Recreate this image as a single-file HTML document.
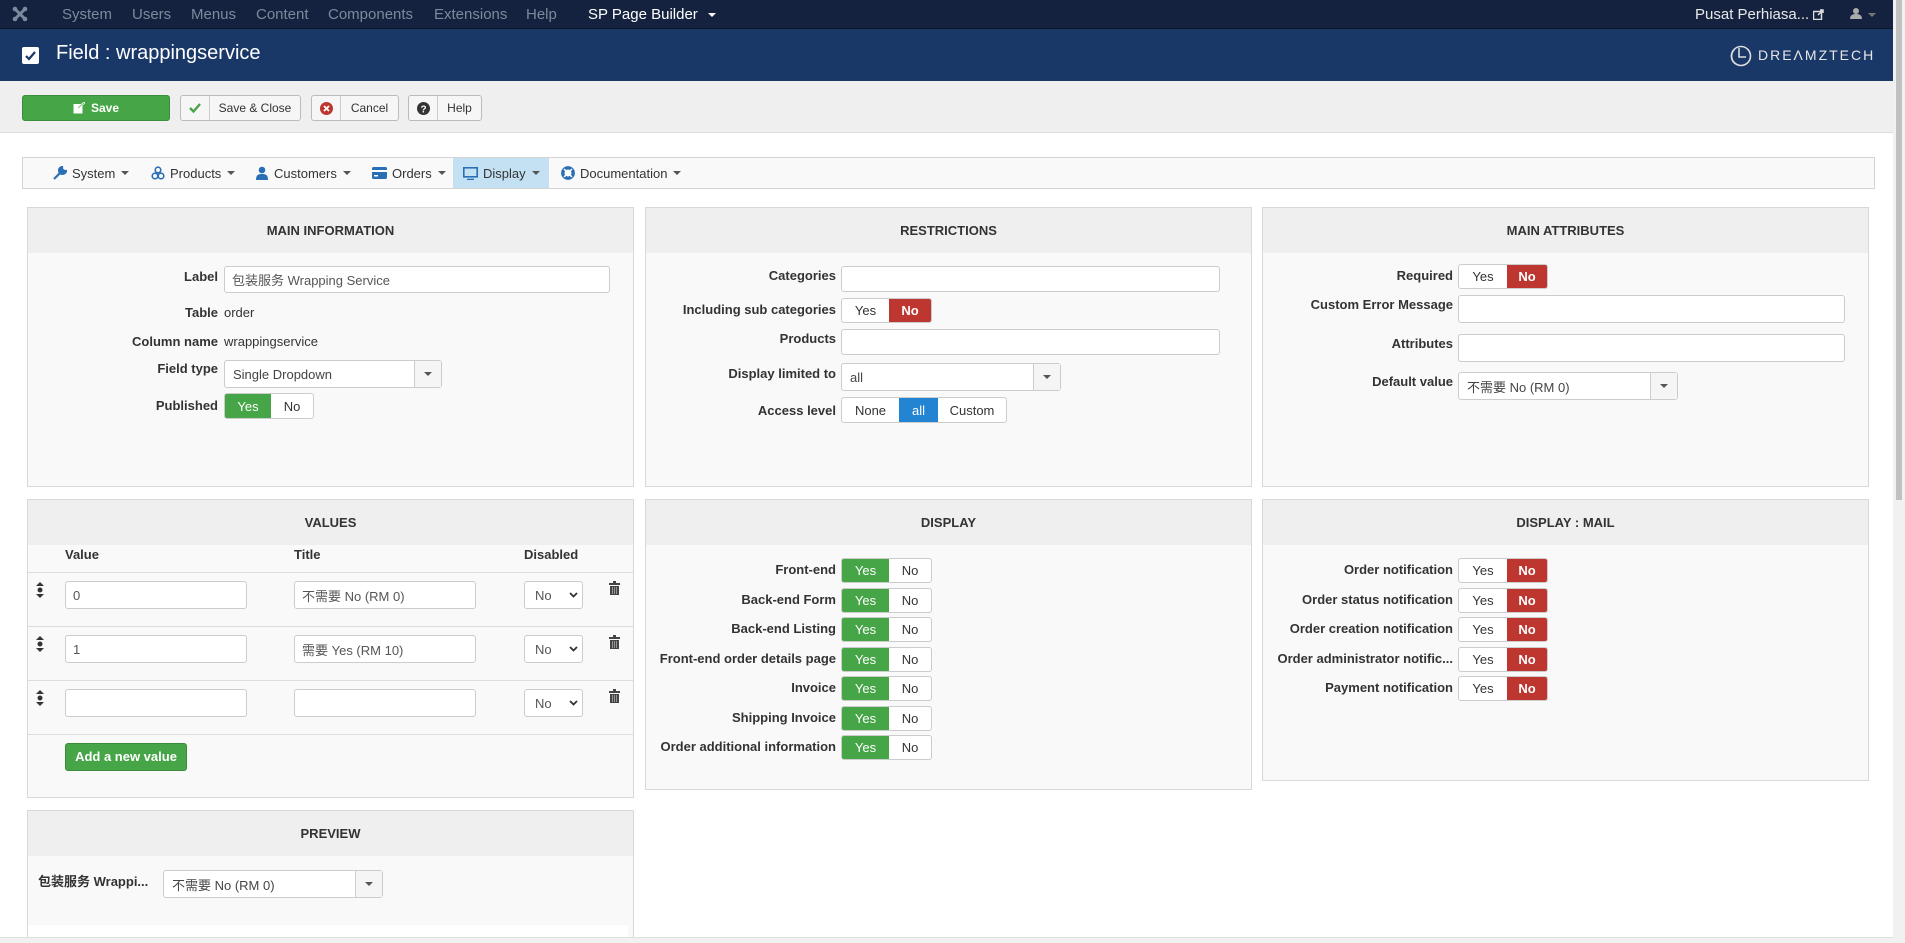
<!DOCTYPE html>
<html style="width:1905px;height:943px;overflow:hidden"><head><meta charset="utf-8"><style>
*{box-sizing:border-box;margin:0;padding:0}
body{width:1905px;height:943px;overflow:hidden;background:#fff;font-family:"Liberation Sans","Noto Sans CJK SC",sans-serif;font-size:13px;color:#333;position:relative}
.a{position:absolute}
.nav{left:0;top:0;width:1893px;height:29px;background:#14223f;border-bottom:1px solid #0c1628}
.nav span{position:absolute;top:6px;font-size:15px;color:#7d899c}
.hdr{left:0;top:29px;width:1893px;height:52px;background:#1a3867}
.tb{left:0;top:81px;width:1893px;height:52px;background:#efefef;border-bottom:1px solid #ddd}
.btn{position:absolute;top:95px;height:26px;border:1px solid #bbb;border-radius:3px;background:#f6f6f6;font-size:12px;color:#333;display:flex;align-items:center}
.btn .ic{width:29px;height:100%;border-right:1px solid #ccc;display:flex;align-items:center;justify-content:center}
.btn .tx{flex:1;text-align:center}
.tabs{left:22px;top:157px;width:1853px;height:32px;background:#f9f9f9;border:1px solid #d4d4d4}
.tab{position:absolute;top:0;height:30px;display:flex;align-items:center;font-size:13px;color:#333}
.car{display:inline-block;width:0;height:0;border-left:4px solid transparent;border-right:4px solid transparent;border-top:4px solid #555;margin-left:6px;vertical-align:middle}
.pn{position:absolute;background:#f9f9f9;border:1px solid #d8d8d8}
.ph{height:45px;background:#efefef;text-align:center;line-height:45px;font-weight:bold;font-size:13px;color:#333}
.l{position:absolute;text-align:right;font-weight:bold;font-size:13px;color:#333;white-space:nowrap}
.v{position:absolute;font-size:13px;color:#333}
.in{position:absolute;background:#fff;border:1px solid #ccc;border-radius:3px;font-size:13px;color:#555;padding-left:7px;display:flex;align-items:center}
.sel{position:absolute;background:#fff;border:1px solid #ccc;border-radius:3px;font-size:13px;color:#444;padding-left:8px;display:flex;align-items:center}
.sel .dd{position:absolute;right:0;top:0;bottom:0;width:27px;border-left:1px solid #ccc;background:#f5f5f5;display:flex;align-items:center;justify-content:center}
.sel .dd i{border-left:4px solid transparent;border-right:4px solid transparent;border-top:4px solid #555}
.tg{position:absolute;height:25px;border:1px solid #ccc;border-radius:3px;display:flex;background:#fff;overflow:hidden;font-size:13px}
.tg span{display:flex;align-items:center;justify-content:center;height:100%;color:#333}
.g{background:#46a546;color:#fff!important}
.r{background:#bd362f;color:#fff!important;font-weight:bold}
.b{background:#2384d3;color:#fff!important}
.sm{position:absolute;width:59px;height:28px;background:#fff;border:1px solid #ccc;border-radius:3px;font-size:13px;color:#555;padding-left:10px;display:flex;align-items:center}
.hl{position:absolute;left:28px;width:605px;height:1px;background:#ddd}
</style></head><body>

<div class="a nav">
 <svg class="a" style="left:12px;top:6px" width="16" height="16" viewBox="0 0 16 16"><g fill="#7d899c"><circle cx="3" cy="3" r="2.3"/><circle cx="13" cy="3" r="2.3"/><circle cx="3" cy="13" r="2.3"/><circle cx="13" cy="13" r="2.3"/><path d="M4 4l8 8M12 4l-8 8" stroke="#7d899c" stroke-width="3"/></g></svg>
 <span style="left:62px">System</span><span style="left:132px">Users</span><span style="left:191px">Menus</span><span style="left:256px">Content</span><span style="left:328px">Components</span><span style="left:434px">Extensions</span><span style="left:526px">Help</span>
 <span style="left:588px;color:#fff">SP Page Builder <i class="car" style="border-top-color:#fff"></i></span>
 <span style="left:1695px;color:#e8e8e8;font-size:15px">Pusat Perhiasa...</span>
 <svg class="a" style="left:1813px;top:9px" width="11" height="11" viewBox="0 0 11 11"><rect x="0.5" y="2.5" width="8" height="8" fill="none" stroke="#ddd" stroke-width="1.5"/><path d="M5 6L10 1M7 1h3v3" stroke="#ddd" stroke-width="1.5" fill="none"/></svg>
 <svg class="a" style="left:1850px;top:7px" width="12" height="13" viewBox="0 0 12 13"><circle cx="6" cy="4" r="3" fill="#aaa"/><path d="M0 12c0-4 3-5 6-5s6 1 6 5z" fill="#aaa"/></svg>
 <i class="a car" style="left:1862px;top:13px;border-top-color:#777"></i>
</div>
<div class="a hdr">
 <div class="a" style="left:22px;top:18px;width:17px;height:17px;background:#fff;border-radius:2px"></div>
 <svg class="a" style="left:24px;top:20px" width="13" height="13" viewBox="0 0 13 13"><path d="M2 7l3 3 6-7" stroke="#1a3867" stroke-width="2.2" fill="none"/></svg>
 <div class="a" style="left:56px;top:13px;font-size:20px;color:#fff">Field : wrappingservice</div>
 <svg class="a" style="left:1729px;top:15px" width="24" height="24" viewBox="0 0 24 24"><circle cx="12" cy="12" r="9.5" fill="none" stroke="#ddd" stroke-width="1.6"/><path d="M10 4v9h7" fill="none" stroke="#ddd" stroke-width="1.6"/><path d="M5 6a9 9 0 0 0 2 14" fill="none" stroke="#ddd" stroke-width="1.6"/></svg>
 <div class="a" style="left:1758px;top:18px;font-size:14px;color:#e6e6e6;letter-spacing:2px">DREΛMZTECH</div>
</div>
<div class="a tb"></div>
<div class="btn" style="left:22px;width:148px;background:#46a546;border-color:#3b8c3b;color:#fff;justify-content:center;font-weight:bold"><svg width="12" height="12" viewBox="0 0 12 12" style="margin-right:6px"><rect x="0.5" y="2" width="9" height="9.5" fill="#fff"/><path d="M4 8l1-3 6-5 1 1-6 5z" fill="#46a546" stroke="#fff" stroke-width="0.8"/></svg>Save</div>
<div class="btn" style="left:180px;width:121px"><div class="ic"><svg width="12" height="10" viewBox="0 0 12 10"><path d="M1 5l3.5 3.5L11 1" stroke="#46a546" stroke-width="2.4" fill="none"/></svg></div><div class="tx">Save &amp; Close</div></div>
<div class="btn" style="left:311px;width:88px"><div class="ic"><svg width="13" height="13" viewBox="0 0 13 13"><circle cx="6.5" cy="6.5" r="6.5" fill="#bd362f"/><path d="M4 4l5 5M9 4l-5 5" stroke="#fff" stroke-width="1.8"/></svg></div><div class="tx">Cancel</div></div>
<div class="btn" style="left:408px;width:74px"><div class="ic"><svg width="13" height="13" viewBox="0 0 13 13"><circle cx="6.5" cy="6.5" r="6.5" fill="#333"/><text x="6.5" y="10.5" font-size="10" font-weight="bold" fill="#fff" text-anchor="middle" font-family="Liberation Sans">?</text></svg></div><div class="tx">Help</div></div>

<div class="a tabs">
 <div class="tab" style="left:30px"><svg width="14" height="14" viewBox="0 0 14 14" style="margin-right:5px"><path d="M1 13l7-7M9 1a3.5 3.5 0 1 0 4 4l-2 0-2-2z" stroke="#2a6fb5" stroke-width="2.2" fill="#2a6fb5"/></svg>System<i class="car"></i></div>
 <div class="tab" style="left:128px"><svg width="14" height="14" viewBox="0 0 14 14" style="margin-right:5px"><g fill="none" stroke="#2a6fb5" stroke-width="1.6"><circle cx="7" cy="4" r="2.8"/><circle cx="4" cy="10" r="2.8"/><circle cx="10" cy="10" r="2.8"/></g></svg>Products<i class="car"></i></div>
 <div class="tab" style="left:233px"><svg width="12" height="14" viewBox="0 0 12 14" style="margin-right:6px"><circle cx="6" cy="4" r="3.3" fill="#2a6fb5"/><path d="M0 14c0-5 2-6 6-6s6 1 6 6z" fill="#2a6fb5"/></svg>Customers<i class="car"></i></div>
 <div class="tab" style="left:349px"><svg width="15" height="12" viewBox="0 0 15 12" style="margin-right:5px"><rect x="0" y="0" width="15" height="12" rx="1.5" fill="#2a6fb5"/><rect x="0" y="3" width="15" height="2" fill="#fff"/><rect x="2" y="8" width="4" height="1.5" fill="#fff"/></svg>Orders<i class="car"></i></div>
 <div class="tab" style="left:430px;width:96px;background:#c3e1f3;padding-left:10px"><svg width="15" height="13" viewBox="0 0 15 13" style="margin-right:5px"><rect x="0.8" y="0.8" width="13.4" height="9" fill="none" stroke="#2a6fb5" stroke-width="1.6"/><path d="M4 12.5h7" stroke="#2a6fb5" stroke-width="1.6"/></svg>Display<i class="car"></i></div>
 <div class="tab" style="left:538px"><svg width="14" height="14" viewBox="0 0 14 14" style="margin-right:5px"><circle cx="7" cy="7" r="5.2" fill="none" stroke="#2a6fb5" stroke-width="3.4"/><circle cx="7" cy="7" r="2" fill="#fff"/><path d="M3 3l2 2M11 3l-2 2M3 11l2-2M11 11l-2-2" stroke="#fff" stroke-width="1.5"/></svg>Documentation<i class="car"></i></div>
</div>

<!-- MAIN INFORMATION -->
<div class="pn" style="left:27px;top:207px;width:607px;height:280px"><div class="ph">MAIN INFORMATION</div></div>
<div class="l" style="left:0;width:218px;top:269px">Label</div>
<div class="in" style="left:224px;top:266px;width:386px;height:27px">包装服务 Wrapping Service</div>
<div class="l" style="left:0;width:218px;top:305px">Table</div><div class="v" style="left:224px;top:305px">order</div>
<div class="l" style="left:0;width:218px;top:334px">Column name</div><div class="v" style="left:224px;top:334px">wrappingservice</div>
<div class="l" style="left:0;width:218px;top:361px">Field type</div>
<div class="sel" style="left:224px;top:360px;width:218px;height:28px">Single Dropdown<div class="dd"><i></i></div></div>
<div class="l" style="left:0;width:218px;top:398px">Published</div>
<div class="tg" style="left:224px;top:393px;width:90px;height:26px"><span class="g" style="width:46px">Yes</span><span style="flex:1">No</span></div>

<!-- RESTRICTIONS -->
<div class="pn" style="left:645px;top:207px;width:607px;height:280px"><div class="ph">RESTRICTIONS</div></div>
<div class="l" style="left:0;width:836px;top:268px">Categories</div>
<div class="in" style="left:841px;top:266px;width:379px;height:26px"></div>
<div class="l" style="left:0;width:836px;top:302px">Including sub categories</div>
<div class="tg" style="left:841px;top:298px;width:91px"><span style="width:47px">Yes</span><span class="r" style="flex:1">No</span></div>
<div class="l" style="left:0;width:836px;top:331px">Products</div>
<div class="in" style="left:841px;top:329px;width:379px;height:26px"></div>
<div class="l" style="left:0;width:836px;top:366px">Display limited to</div>
<div class="sel" style="left:841px;top:363px;width:220px;height:28px">all<div class="dd"><i></i></div></div>
<div class="l" style="left:0;width:836px;top:403px">Access level</div>
<div class="tg" style="left:841px;top:397px;width:166px;height:26px"><span style="width:57px">None</span><span class="b" style="width:39px">all</span><span style="flex:1">Custom</span></div>

<!-- MAIN ATTRIBUTES -->
<div class="pn" style="left:1262px;top:207px;width:607px;height:280px"><div class="ph">MAIN ATTRIBUTES</div></div>
<div class="l" style="left:0;width:1453px;top:268px">Required</div>
<div class="tg" style="left:1458px;top:264px;width:90px"><span style="width:48px">Yes</span><span class="r" style="flex:1">No</span></div>
<div class="l" style="left:0;width:1453px;top:297px">Custom Error Message</div>
<div class="in" style="left:1458px;top:295px;width:387px;height:28px"></div>
<div class="l" style="left:0;width:1453px;top:336px">Attributes</div>
<div class="in" style="left:1458px;top:334px;width:387px;height:28px"></div>
<div class="l" style="left:0;width:1453px;top:374px">Default value</div>
<div class="sel" style="left:1458px;top:372px;width:220px;height:28px">不需要 No (RM 0)<div class="dd"><i></i></div></div>

<!-- VALUES -->
<div class="pn" style="left:27px;top:499px;width:607px;height:299px"><div class="ph">VALUES</div></div>
<div class="l" style="left:65px;top:547px">Value</div>
<div class="l" style="left:294px;top:547px">Title</div>
<div class="l" style="left:524px;top:547px">Disabled</div>
<div class="hl" style="top:572px"></div><div class="hl" style="top:626px"></div><div class="hl" style="top:680px"></div><div class="hl" style="top:734px"></div>
<div class="in" style="left:65px;top:581px;width:182px;height:28px">0</div>
<div class="in" style="left:294px;top:581px;width:182px;height:28px">不需要 No (RM 0)</div>
<div class="in" style="left:65px;top:635px;width:182px;height:28px">1</div>
<div class="in" style="left:294px;top:635px;width:182px;height:28px">需要 Yes (RM 10)</div>
<div class="in" style="left:65px;top:689px;width:182px;height:28px"></div>
<div class="in" style="left:294px;top:689px;width:182px;height:28px"></div>
<div class="sm" style="left:524px;top:581px">No</div><div class="sm" style="left:524px;top:635px">No</div><div class="sm" style="left:524px;top:689px">No</div>
<svg class="a" style="left:569px;top:592px" width="9" height="6" viewBox="0 0 9 6"><path d="M1 1l3.5 3.5L8 1" stroke="#333" stroke-width="1.8" fill="none"/></svg>
<svg class="a" style="left:569px;top:646px" width="9" height="6" viewBox="0 0 9 6"><path d="M1 1l3.5 3.5L8 1" stroke="#333" stroke-width="1.8" fill="none"/></svg>
<svg class="a" style="left:569px;top:700px" width="9" height="6" viewBox="0 0 9 6"><path d="M1 1l3.5 3.5L8 1" stroke="#333" stroke-width="1.8" fill="none"/></svg>
<svg class="a" style="left:36px;top:582px" width="8" height="16" viewBox="0 0 8 16"><path d="M4 0L8 4H0zM4 16L0 12h8z" fill="#333"/><circle cx="4" cy="8" r="2.5" fill="#333"/></svg>
<svg class="a" style="left:36px;top:636px" width="8" height="16" viewBox="0 0 8 16"><path d="M4 0L8 4H0zM4 16L0 12h8z" fill="#333"/><circle cx="4" cy="8" r="2.5" fill="#333"/></svg>
<svg class="a" style="left:36px;top:690px" width="8" height="16" viewBox="0 0 8 16"><path d="M4 0L8 4H0zM4 16L0 12h8z" fill="#333"/><circle cx="4" cy="8" r="2.5" fill="#333"/></svg>
<svg class="a" style="left:609px;top:581px" width="11" height="14" viewBox="0 0 11 14"><rect x="0" y="2" width="11" height="2" fill="#444"/><rect x="4" y="0" width="3" height="2" fill="#444"/><rect x="1" y="5" width="9" height="9" fill="#444"/><path d="M3.5 6v7M5.5 6v7M7.5 6v7" stroke="#aaa" stroke-width="0.8"/></svg>
<svg class="a" style="left:609px;top:635px" width="11" height="14" viewBox="0 0 11 14"><rect x="0" y="2" width="11" height="2" fill="#444"/><rect x="4" y="0" width="3" height="2" fill="#444"/><rect x="1" y="5" width="9" height="9" fill="#444"/><path d="M3.5 6v7M5.5 6v7M7.5 6v7" stroke="#aaa" stroke-width="0.8"/></svg>
<svg class="a" style="left:609px;top:689px" width="11" height="14" viewBox="0 0 11 14"><rect x="0" y="2" width="11" height="2" fill="#444"/><rect x="4" y="0" width="3" height="2" fill="#444"/><rect x="1" y="5" width="9" height="9" fill="#444"/><path d="M3.5 6v7M5.5 6v7M7.5 6v7" stroke="#aaa" stroke-width="0.8"/></svg>
<div class="a" style="left:65px;top:743px;width:122px;height:28px;background:#46a546;border:1px solid #3b8c3b;border-radius:3px;color:#fff;font-weight:bold;font-size:13px;text-align:center;line-height:26px">Add a new value</div>

<!-- DISPLAY -->
<div class="pn" style="left:645px;top:499px;width:607px;height:291px"><div class="ph">DISPLAY</div></div>
<div class="l" style="left:0;width:836px;top:562px">Front-end</div>
<div class="l" style="left:0;width:836px;top:592px">Back-end Form</div>
<div class="l" style="left:0;width:836px;top:621px">Back-end Listing</div>
<div class="l" style="left:0;width:836px;top:651px">Front-end order details page</div>
<div class="l" style="left:0;width:836px;top:680px">Invoice</div>
<div class="l" style="left:0;width:836px;top:710px">Shipping Invoice</div>
<div class="l" style="left:0;width:836px;top:739px">Order additional information</div>
<div class="tg" style="left:841px;top:558px;width:91px"><span class="g" style="width:47px">Yes</span><span style="flex:1">No</span></div>
<div class="tg" style="left:841px;top:588px;width:91px"><span class="g" style="width:47px">Yes</span><span style="flex:1">No</span></div>
<div class="tg" style="left:841px;top:617px;width:91px"><span class="g" style="width:47px">Yes</span><span style="flex:1">No</span></div>
<div class="tg" style="left:841px;top:647px;width:91px"><span class="g" style="width:47px">Yes</span><span style="flex:1">No</span></div>
<div class="tg" style="left:841px;top:676px;width:91px"><span class="g" style="width:47px">Yes</span><span style="flex:1">No</span></div>
<div class="tg" style="left:841px;top:706px;width:91px"><span class="g" style="width:47px">Yes</span><span style="flex:1">No</span></div>
<div class="tg" style="left:841px;top:735px;width:91px"><span class="g" style="width:47px">Yes</span><span style="flex:1">No</span></div>

<!-- DISPLAY : MAIL -->
<div class="pn" style="left:1262px;top:499px;width:607px;height:282px"><div class="ph">DISPLAY : MAIL</div></div>
<div class="l" style="left:0;width:1453px;top:562px">Order notification</div>
<div class="l" style="left:0;width:1453px;top:592px">Order status notification</div>
<div class="l" style="left:0;width:1453px;top:621px">Order creation notification</div>
<div class="l" style="left:0;width:1453px;top:651px">Order administrator notific...</div>
<div class="l" style="left:0;width:1453px;top:680px">Payment notification</div>
<div class="tg" style="left:1458px;top:558px;width:90px"><span style="width:48px">Yes</span><span class="r" style="flex:1">No</span></div>
<div class="tg" style="left:1458px;top:588px;width:90px"><span style="width:48px">Yes</span><span class="r" style="flex:1">No</span></div>
<div class="tg" style="left:1458px;top:617px;width:90px"><span style="width:48px">Yes</span><span class="r" style="flex:1">No</span></div>
<div class="tg" style="left:1458px;top:647px;width:90px"><span style="width:48px">Yes</span><span class="r" style="flex:1">No</span></div>
<div class="tg" style="left:1458px;top:676px;width:90px"><span style="width:48px">Yes</span><span class="r" style="flex:1">No</span></div>

<!-- PREVIEW -->
<div class="pn" style="left:27px;top:810px;width:607px;height:133px;border-bottom:none"><div class="ph">PREVIEW</div></div>
<div class="a" style="left:28px;top:925px;width:600px;height:12px;background:#fff"></div>
<div class="l" style="left:38px;top:871px">包装服务 Wrappi...</div>
<div class="sel" style="left:163px;top:870px;width:220px;height:28px">不需要 No (RM 0)<div class="dd"><i></i></div></div>

<!-- scrollbars -->
<div class="a" style="left:1893px;top:0;width:12px;height:943px;background:#f1f1f1"></div>
<div class="a" style="left:1896px;top:0;width:6px;height:500px;background:#c1c1c1"></div>
<div class="a" style="left:0;top:937px;width:1893px;height:6px;background:#f1f1f1;border-top:1px solid #e0e0e0"></div>
</body></html>
